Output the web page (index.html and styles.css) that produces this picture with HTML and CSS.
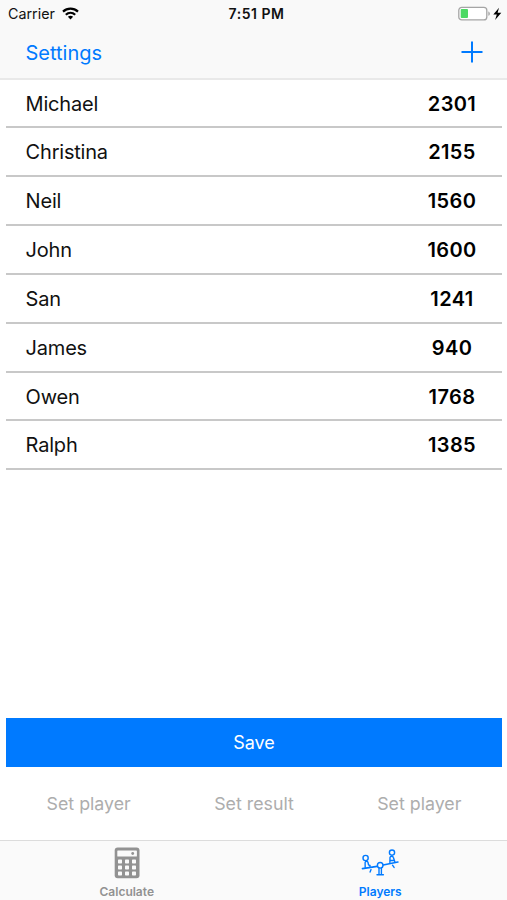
FILE: index.html
```html
<!DOCTYPE html>
<html lang="en">
<head>
  <meta charset="UTF-8">
  <meta name="viewport" content="width=device-width, initial-scale=1">
  <title>Players</title>
  <link rel="stylesheet" href="styles.css">
</head>
<body>

<header>
  <div class="status-bar">
    <div class="carrier">
      <span>Carrier</span>
      <svg width="17" height="13" viewBox="0 0 17 13" fill="none" stroke="#000" stroke-width="2.2">
        <path d="M1 4.6C5.3.6 11.7.6 16 4.6"/>
        <path d="M3.8 7.7c2.7-2.5 6.7-2.5 9.4 0"/>
        <path d="M8.5 12.5L5.9 9.8c1.5-1.4 3.7-1.4 5.2 0z" fill="#000" stroke="none"/>
      </svg>
    </div>
    <div class="time">7:51 PM</div>
    <div class="battery">
      <svg width="44" height="16" viewBox="0 0 44 16">
        <rect x=".8" y="1.300" width="28" height="12.600" rx="3" fill="#fff" stroke="#a5a5a5" stroke-width="1.300"/>
        <rect x="2.700" y="3.100" width="7.300" height="9" rx="1" fill="#4cd964"/>
        <path d="M30.300 5.400c2.100.7 2.100 3.700 0 4.400z" fill="#a5a5a5"/>
        <path d="M41 1.700L35.300 8.500h3.500l-1.700 5.500 6.200-7.200h-3.700z" fill="#000"/>
      </svg>
    </div>
  </div>
  <nav>
    <a class="settings">Settings</a>
    <a class="add" aria-label="Add player">
      <svg width="22" height="22" viewBox="0 0 22 22" stroke="#007aff" stroke-width="2">
        <path d="M11 .5v21M.5 11h21"/>
      </svg>
    </a>
  </nav>
</header>

<main>
  <ul class="players">
    <li><span>Michael</span><b>2301</b></li>
    <li><span>Christina</span><b>2155</b></li>
    <li><span>Neil</span><b>1560</b></li>
    <li><span>John</span><b>1600</b></li>
    <li><span>San</span><b>1241</b></li>
    <li><span>James</span><b>940</b></li>
    <li><span>Owen</span><b>1768</b></li>
    <li><span>Ralph</span><b>1385</b></li>
  </ul>

  <button class="save">Save</button>

  <div class="match">
    <span>Set player</span>
    <span>Set result</span>
    <span>Set player</span>
  </div>
</main>

<footer>
  <a class="tab">
    <svg width="40" height="32" viewBox="0 0 40 32">
      <rect x="7.700" y=".5" width="24.800" height="30.800" rx="3" fill="#929292"/>
      <rect x="10.300" y="3.500" width="19.600" height="6" rx=".6" fill="#fafafa"/>
      <circle cx="25.700" cy="6.500" r="1.400" fill="#929292"/>
      <g fill="#fafafa">
        <rect x="11" y="12.500" width="4" height="4" rx=".7"/>
        <rect x="18" y="12.500" width="4" height="4" rx=".7"/>
        <rect x="25" y="12.500" width="4" height="4" rx=".7"/>
        <rect x="11" y="18.500" width="4" height="4" rx=".7"/>
        <rect x="18" y="18.500" width="4" height="4" rx=".7"/>
        <rect x="25" y="18.500" width="4" height="4" rx=".7"/>
        <rect x="11" y="24.500" width="4" height="4" rx=".7"/>
        <rect x="18" y="24.500" width="4" height="4" rx=".7"/>
        <rect x="25" y="24.500" width="4" height="4" rx=".7"/>
      </g>
    </svg>
    <span>Calculate</span>
  </a>
  <a class="tab active">
    <svg width="40" height="32" viewBox="0 0 40 32" fill="none" stroke="#007aff" stroke-width="1.400" stroke-linecap="round" stroke-linejoin="round">
      <path d="M2.500 21.600l14.600-2.200M23.200 18l14.700-3" stroke-width="1.700"/>
      <circle cx="20.200" cy="18.300" r="2.800"/>
      <path d="M19 21.300v5.500M21.400 21.300v5.500M17 27.700h6.400"/>
      <circle cx="5.600" cy="11" r="2.600"/>
      <path d="M5.200 20.500l-.1-5c.2-1.600 2.400-1.700 2.900-.2l.5 2.500 1.500.7v1.500M11 22.600l-.9 2.400"/>
      <circle cx="32" cy="5.600" r="2.600"/>
      <path d="M29.900 15.600l.1-5.200c.4-1.500 2.900-1.500 3.300-.1l1.600 4.700M30.600 13.500h3.500M32.500 18.200l1.600 2.200"/>
    </svg>
    <span>Players</span>
  </a>
</footer>

</body>
</html>
```
FILE: styles.css
```css
* {
  box-sizing: border-box;
}
body {
  display: flex;
  flex-direction: column;
  height: 900px;
  margin: 0;
  background: #fff;
  color: #111;
  font-family: Inter, "Liberation Sans", sans-serif;
  overflow: hidden;
}
svg {
  display: block;
}
header {
  height: 80px;
  background: #f9f9f9;
  border-bottom: 2px solid #e9e9e9;
}
.status-bar {
  display: grid;
  grid-template-columns: 1fr auto 1fr;
  align-items: center;
  height: 27px;
  padding: 0 5px 0 8px;
  font-size: 14.3px;
}
.carrier {
  display: flex;
  align-items: center;
  gap: 7px;
}
.time {
  padding-left: 3px;
  font-weight: 600;
  font-size: 14px;
  letter-spacing: 0.5px;
}
.battery {
  justify-self: end;
}
nav {
  display: flex;
  justify-content: space-between;
  align-items: center;
  height: 50px;
  padding: 0 24px 0 25.5px;
}
.settings {
  padding-top: 1px;
  color: #007aff;
  font-size: 20px;
}
main {
  display: flex;
  flex-direction: column;
  flex: 1;
  padding: 0 5px 0 6px;
}
.players {
  list-style: none;
  margin: 0;
  padding: 0;
}
.players li {
  display: flex;
  justify-content: space-between;
  align-items: center;
  height: 48.85px;
  padding: 1px 0 0 19.6px;
  border-bottom: 2px solid #c8c8c8;
  font-size: 20px;
  letter-spacing: -0.2px;
}
.players li:first-child {
  height: 48.4px;
}
.players b {
  width: 100px;
  color: #000;
  font-weight: 600;
  font-size: 20px;
  letter-spacing: 0.4px;
  text-align: center;
}
.save {
  height: 49px;
  margin-top: auto;
  border: none;
  background: #007aff;
  color: #fff;
  font-family: inherit;
  font-size: 18px;
}
.match {
  display: grid;
  grid-template-columns: repeat(3, 1fr);
  align-items: center;
  height: 73px;
  color: #adadad;
  font-size: 17.8px;
  text-align: center;
}
footer {
  display: flex;
  height: 60px;
  background: #fafafa;
  border-top: 1px solid #dcdcdc;
}
.tab {
  display: flex;
  flex-direction: column;
  align-items: center;
  width: 50%;
  padding-top: 6px;
  color: #929292;
  font-size: 12px;
  font-weight: 600;
  line-height: 15px;
}
.tab span {
  margin-top: 5px;
}
.active {
  color: #007aff;
}
```
